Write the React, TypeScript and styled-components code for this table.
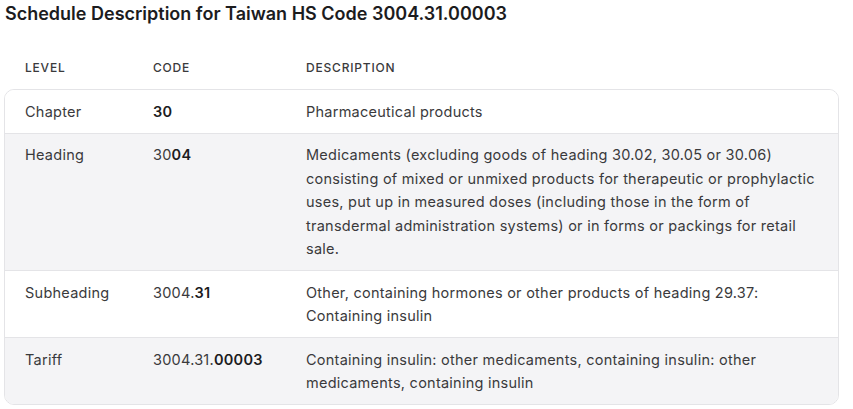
import styled, { createGlobalStyle } from "styled-components";

type Row = {
  level: string;
  code: string;
  strong: string;
  description: string;
};

const rows: Row[] = [
  { level: "Chapter", code: "", strong: "30", description: "Pharmaceutical products" },
  {
    level: "Heading",
    code: "30",
    strong: "04",
    description:
      "Medicaments (excluding goods of heading 30.02, 30.05 or 30.06) consisting of mixed or unmixed products for therapeutic or prophylactic uses, put up in measured doses (including those in the form of transdermal administration systems) or in forms or packings for retail sale.",
  },
  {
    level: "Subheading",
    code: "3004.",
    strong: "31",
    description: "Other, containing hormones or other products of heading 29.37: Containing insulin",
  },
  {
    level: "Tariff",
    code: "3004.31.",
    strong: "00003",
    description:
      "Containing insulin: other medicaments, containing insulin: other medicaments, containing insulin",
  },
];

export default function App() {
  return (
    <>
      <GlobalStyle />
      <Page>
        <Title>Schedule Description for Taiwan HS Code 3004.31.00003</Title>
        <Header>
          <HeadCell>Level</HeadCell>
          <HeadCell>Code</HeadCell>
          <HeadCell>Description</HeadCell>
        </Header>
        <Card>
          {rows.map((row, index) => (
            <TableRow key={row.level} $shaded={index % 2 === 1}>
              <Cell>{row.level}</Cell>
              <Cell>
                {row.code}
                <b>{row.strong}</b>
              </Cell>
              <Cell>{row.description}</Cell>
            </TableRow>
          ))}
        </Card>
      </Page>
    </>
  );
}

const GlobalStyle = createGlobalStyle`
  body {
    margin: 0;
    background: #ffffff;
    font-family: Inter, "Noto Sans", sans-serif;
    color: #3a3a3c;
  }
`;

const Page = styled.div`
  width: 853px;
  padding: 2px 14px 0 4px;
  box-sizing: border-box;
`;

const Title = styled.h1`
  margin: 0 0 0 1px;
  font-size: 18px;
  font-weight: 600;
  line-height: 24px;
  color: #1c1c1e;
`;

const Header = styled.div`
  display: grid;
  grid-template-columns: 128px 153px 1fr;
  padding: 34px 21px 13px;
`;

const HeadCell = styled.div`
  font-size: 12px;
  font-weight: 500;
  text-transform: uppercase;
  letter-spacing: 0.8px;
  line-height: 16px;
  color: #3a3a3c;
`;

const Card = styled.div`
  border: 1px solid #e4e4e7;
  border-radius: 10px;
  overflow: hidden;
`;

const TableRow = styled.div<{ $shaded: boolean }>`
  display: grid;
  grid-template-columns: 128px 153px 1fr;
  padding: 9.5px 17px 9.5px 20px;
  background: ${(p) => (p.$shaded ? "#f4f4f6" : "#ffffff")};
  & + & {
    border-top: 1px solid #e4e4e7;
  }
`;

const Cell = styled.div`
  font-size: 14.5px;
  letter-spacing: 0.25px;
  line-height: 23.5px;

  b {
    font-weight: 600;
    color: #1c1c1e;
  }
`;
